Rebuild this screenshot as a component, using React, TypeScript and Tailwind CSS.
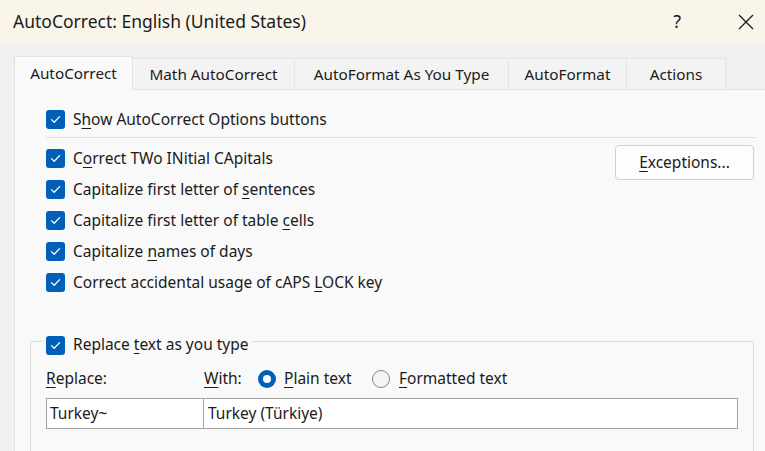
import React from "react";

const F = { fontFamily: '"Noto Sans", "Open Sans", sans-serif' };

function Check() {
  return (
    <span className="flex h-[19px] w-[19px] shrink-0 items-center justify-center rounded-[3px] bg-[#005fb8]">
      <svg width="11" height="9" viewBox="0 0 11 9" fill="none">
        <path d="M1.5 4.6 L4.2 7.2 L9.6 1.6" stroke="#fff" strokeWidth="1.3" strokeLinecap="round" strokeLinejoin="round" />
      </svg>
    </span>
  );
}

function U({ children }: { children: React.ReactNode }) {
  return <span className="underline underline-offset-[3px] decoration-[1px]">{children}</span>;
}

function Row({ children }: { children: React.ReactNode }) {
  return (
    <div className="flex h-[31px] items-center gap-[8px]">
      <Check />
      <span className="text-[15.5px] text-[#1b1b1b]">{children}</span>
    </div>
  );
}

export default function App() {
  const tabs = [
    { label: "Math AutoCorrect", w: "w-[162px]" },
    { label: "AutoFormat As You Type", w: "w-[214px]" },
    { label: "AutoFormat", w: "w-[118px]" },
    { label: "Actions", w: "w-[99px]" },
  ];
  return (
    <div className="h-[451px] w-[765px] overflow-hidden bg-[#f0f0f0] text-[#1b1b1b]" style={F}>
      <div className="flex h-[43px] items-center bg-[#faf5ea] pl-[13px]">
        <span className="text-[17.5px]">AutoCorrect: English (United States)</span>
        <span className="ml-auto mr-[57px] text-[18px]">?</span>
        <svg className="mr-[11px]" width="16" height="16" viewBox="0 0 16 16">
          <path d="M1 1 L15 15 M15 1 L1 15" stroke="#1b1b1b" strokeWidth="1.3" />
        </svg>
      </div>
      <div className="pl-[14px] pt-[13px]">
        <div className="flex h-[33px] items-end">
          <div className="relative z-10 -mb-px flex h-[34px] w-[119px] items-center justify-center border-x border-t border-[#e2e2e2] bg-[#f9f9f9] pb-[1px] text-[15.3px]">
            AutoCorrect
          </div>
          {tabs.map((t) => (
            <div
              key={t.label}
              className={`flex h-[31px] ${t.w} items-center justify-center border-r border-t border-[#e4e4e4] bg-[#f3f3f3] text-[15.3px]`}
            >
              {t.label}
            </div>
          ))}
        </div>
        <div className="h-[400px] w-[800px] border-l border-t border-[#e2e2e2] bg-[#f9f9f9] pl-[15px] pt-[14px]">
          <div className="w-[740px] pl-[16px]">
            <Row>
              S<U>h</U>ow AutoCorrect Options buttons
            </Row>
            <div className="mt-[2px] w-[710px] border-t border-[#dedede]" />
            <div className="mt-[5px] flex w-[708px]">
              <div className="flex-1">
                <Row>
                  C<U>o</U>rrect TWo INitial CApitals
                </Row>
                <Row>
                  Capitalize first letter of <U>s</U>entences
                </Row>
                <Row>
                  Capitalize first letter of table <U>c</U>ells
                </Row>
                <Row>
                  Capitalize <U>n</U>ames of days
                </Row>
                <Row>
                  Correct accidental usage of cAPS <U>L</U>OCK key
                </Row>
              </div>
              <div className="mt-[2px] flex h-[35px] w-[139px] items-center justify-center rounded-[4px] border border-[#d0d0d0] bg-[#fdfdfd] text-[15.5px]">
                <U>E</U>xceptions...
              </div>
            </div>
          </div>
          <fieldset className="mt-[28px] h-[200px] w-[724px] border border-[#dcdcdc] p-0">
            <legend className="ml-[11px] px-[4px] pt-[7px]">
              <div className="flex h-[24px] items-center gap-[8px]">
                <Check />
                <span className="text-[15.5px]">
                  Replace <U>t</U>ext as you type
                </span>
              </div>
            </legend>
            <div className="pl-[15px]">
              <div className="mt-[10px] flex h-[24px] items-center text-[15.5px]">
                <span className="w-[158px]">
                  <U>R</U>eplace:
                </span>
                <span className="w-[54px]">
                  <U>W</U>ith:
                </span>
                <span className="flex h-[18px] w-[18px] items-center justify-center rounded-full bg-[#005fb8]">
                  <span className="h-[8px] w-[8px] rounded-full bg-white" />
                </span>
                <span className="ml-[8px] w-[88px]">
                  <U>P</U>lain text
                </span>
                <span className="h-[18px] w-[18px] rounded-full border border-[#858585] bg-[#f5f5f5]" />
                <span className="ml-[9px]">
                  <U>F</U>ormatted text
                </span>
              </div>
              <div className="mt-[7px] flex h-[31px] w-[692px] text-[15.5px]">
                <div className="flex w-[158px] items-center border border-[#a3a3a3] bg-white pl-[3px]">Turkey~</div>
                <div className="-ml-px flex flex-1 items-center border border-[#a3a3a3] bg-white pl-[4px]">
                  Turkey (Türkiye)
                </div>
              </div>
            </div>
          </fieldset>
        </div>
      </div>
    </div>
  );
}
